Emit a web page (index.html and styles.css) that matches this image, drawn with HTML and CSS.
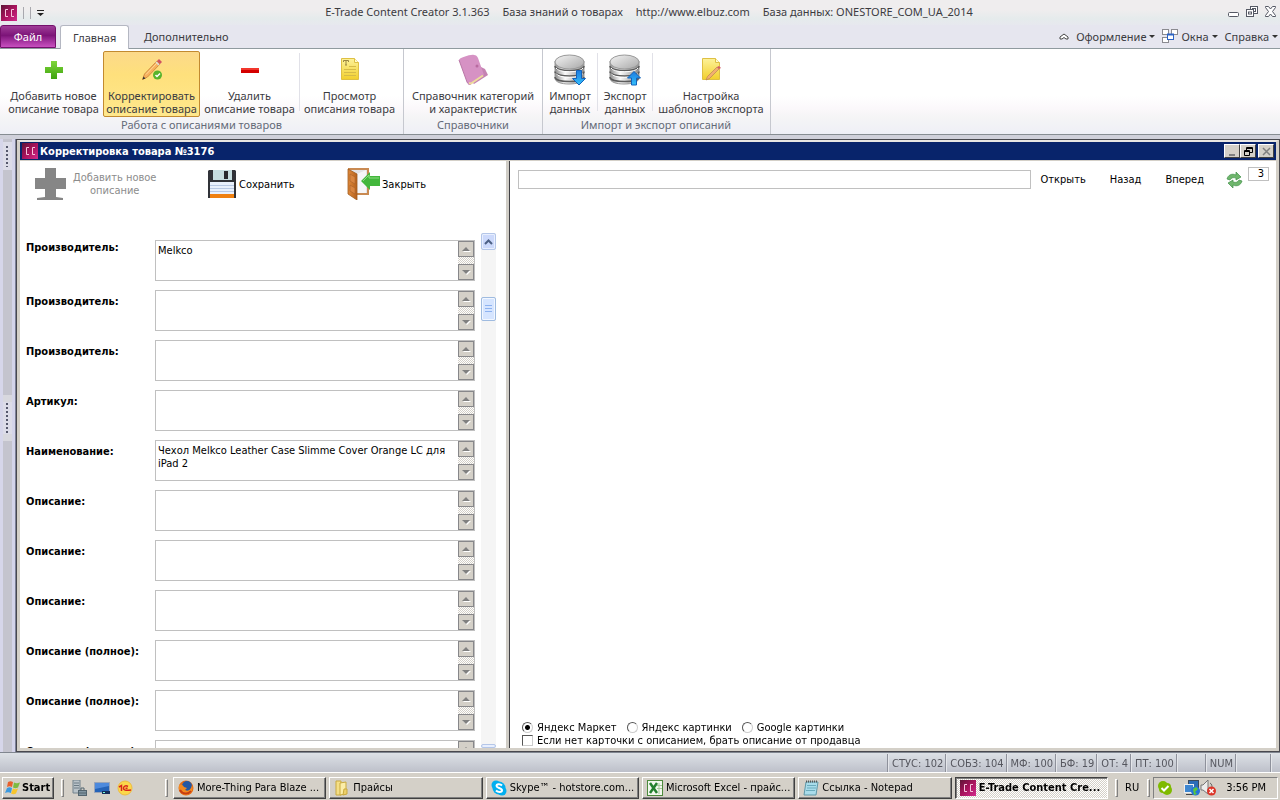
FILE: index.html
```html
<!DOCTYPE html>
<html lang="ru">
<head>
<meta charset="utf-8">
<title>E-Trade Content Creator</title>
<link rel="stylesheet" href="styles.css">
</head>
<body>
<svg class="defs" aria-hidden="true">
  <defs>
    <linearGradient id="gCC" x1="0" y1="0" x2="1" y2="1"><stop offset="0" stop-color="#5e1436"/><stop offset=".5" stop-color="#a8125c"/><stop offset="1" stop-color="#d22a8c"/></linearGradient>
    <linearGradient id="gGreen" x1="0" y1="0" x2="0" y2="1"><stop offset="0" stop-color="#7fd63a"/><stop offset="1" stop-color="#3da30f"/></linearGradient>
    <linearGradient id="gNote" x1="0" y1="0" x2="0" y2="1"><stop offset="0" stop-color="#fdf29a"/><stop offset="1" stop-color="#f2cf2c"/></linearGradient>
    <linearGradient id="gDisk" x1="0" y1="0" x2="1" y2="1"><stop offset="0" stop-color="#f4f4f4"/><stop offset="1" stop-color="#a8a8a8"/></linearGradient>
    <linearGradient id="gSide" x1="0" y1="0" x2="1" y2="0"><stop offset="0" stop-color="#8c8c8c"/><stop offset=".35" stop-color="#fafafa"/><stop offset="1" stop-color="#8c8c8c"/></linearGradient>
    <linearGradient id="gBlue" x1="0" y1="0" x2="0" y2="1"><stop offset="0" stop-color="#1b7be0"/><stop offset="1" stop-color="#35c0fa"/></linearGradient>
    <linearGradient id="gDoor" x1="0" y1="0" x2="1" y2="0"><stop offset="0" stop-color="#e08a3c"/><stop offset="1" stop-color="#b5601c"/></linearGradient>
    <symbol id="cc" viewBox="0 0 16 16"><rect width="16" height="16" fill="url(#gCC)"/><path d="M7 4.500H4.500v7H7M13 4.500h-2.500v7H13" fill="none" stroke="#f6c4de"/></symbol>
    <symbol id="db" viewBox="0 0 32 32">
      <path d="M1 7v17c0 4 6 6 14 6s15-2 15-6V7z" fill="url(#gSide)" stroke="#999"/>
      <path d="M1 12c0 6 29 6 29 0M1 17.500c0 6 29 6 29 0M1 23c0 6 29 6 29 0" fill="none" stroke="#5c5c5c" stroke-width="1.500"/>
      <path d="M2 14c2 5 25 5 27 0M2 19.500c2 5 25 5 27 0" fill="none" stroke="#fff"/>
      <ellipse cx="15.500" cy="8" rx="14.500" ry="7" fill="url(#gDisk)" stroke="#999"/>
    </symbol>
  </defs>
</svg>

<header class="titlebar">
  <div class="quick">
    <svg class="i16"><use href="#cc"/></svg>
    <i class="qsep"></i><i class="qsep"></i>
    <svg width="7" height="6" viewBox="0 0 7 6"><path d="M0 0h7v1H0zM0 3h7L3.500 6z" fill="#222"/></svg>
  </div>
  <div class="caption"><span>E-Trade Content Creator 3.1.363</span><span>База знаний о товарах</span><span>http://www.elbuz.com</span><span>База данных: ONESTORE_COM_UA_2014</span></div>
  <div class="winctl">
    <svg width="11" height="12" viewBox="0 0 11 12"><rect x=".5" y="6.500" width="10" height="4" rx="1" fill="#fff" stroke="#555964"/></svg>
    <svg width="12" height="12" viewBox="0 0 12 12" fill="#fff" stroke="#555964"><rect x="4.500" y=".5" width="7" height="7"/><rect x="6.500" y="2.500" width="3" height="3"/><rect x=".5" y="3.500" width="7" height="7"/><rect x="2.500" y="6" width="3" height="2"/></svg>
    <svg width="11" height="11" viewBox="0 0 11 11" fill="#fff" stroke="#555964"><path d="M.5.500h3l2 2.500 2-2.500h3v1L7.500 5.500l3 4v1h-3l-2-2.500-2 2.500h-3v-1l3-4-3-4z"/></svg>
  </div>
</header>

<nav class="tabs">
  <button class="file">Файл</button>
  <button class="tab on">Главная</button>
  <button class="tab">Дополнительно</button>
  <div class="tabs-right">
    <svg width="10" height="8" viewBox="0 0 10 8"><path d="M1 4l4-3 4 3v2H7L5 4.500 3 6H1z" fill="#fff" stroke="#444"/></svg>
    <button class="drop">Оформление<i></i></button>
    <button class="drop win"><svg width="16" height="15" viewBox="0 0 16 15" fill="#fff" stroke="#8a8a90"><rect x=".5" y=".5" width="6" height="5"/><rect x="9.500" y=".5" width="6" height="5"/><rect x=".5" y="8.500" width="6" height="5"/><rect x="5.500" y="5.500" width="6" height="5" stroke="#2b62c4"/><path d="M5 5.500h7" stroke="#2b62c4" stroke-width="2"/></svg>Окна<i></i></button>
    <button class="drop">Справка<i></i></button>
  </div>
</nav>

<section class="ribbon">
  <div class="group">
    <div class="tools">
      <button class="tool"><svg class="i32" viewBox="0 0 32 32"><path d="M13 7h6v6h6v6h-6v6h-6v-6H7v-6h6z" fill="url(#gGreen)"/></svg><span>Добавить новое<br>описание товара</span></button>
      <button class="tool on"><svg class="i32" viewBox="0 0 32 32"><path d="M6.500 25.500L8.500 20 21 7l3 3-12.500 13z" fill="#f8b05c" stroke="#c5803a" stroke-width=".8"/><path d="M21 7l2-2 3 3-2 2z" fill="#cf5360"/><path d="M20 8l3 3" stroke="#d8dce0" stroke-width="1.500"/><path d="M10 20.500L21 9" stroke="#ffdb9c"/><path d="M6.500 25.500l1-3 2 2z" fill="#333"/><circle cx="21.500" cy="21" r="4.500" fill="#58b32c"/><path d="M19.500 21l1.500 1.500 3-3" stroke="#fff" fill="none" stroke-width="1.500"/></svg><span>Корректировать<br>описание товара</span></button>
      <button class="tool"><svg class="i32" viewBox="0 0 32 32"><rect x="7" y="14" width="18" height="5" fill="#d40000"/><rect x="7" y="14" width="18" height="2" fill="#f2362c"/></svg><span>Удалить<br>описание товара</span></button>
      <i class="vsep"></i>
      <button class="tool"><svg class="i32" viewBox="0 0 32 32"><path d="M7.500 4.500h13l4 4v17h-17z" fill="url(#gNote)" stroke="#dec044"/><path d="M20.500 4.500v4h4" fill="#fffbd0" stroke="#dec044"/><path d="M9.500 8V6.500h5V8M12 6.500V11M11 11h2" stroke="#9a8740" fill="none"/><path d="M15 12.500h7M10 15.500h12M10 18.500h12M10 21.500h12" stroke="#d6bb48"/></svg><span>Просмотр<br>описания товара</span></button>
    </div>
    <div class="gname">Работа с описаниями товаров</div>
  </div>
  <div class="group">
    <div class="tools">
      <button class="tool w132"><svg class="i32" viewBox="0 0 32 32"><path d="M24 13l4 2 3 6-14 9-4-4z" fill="#c583b2"/><path d="M2 6c0-2 12-6 15-5 2 0 3 1 4 3l6 17-13 9c-2 1-3 0-4-2z" fill="#d692c4"/><path d="M2 6l8 22c1 2 2 3 4 2" fill="none" stroke="#b977a6"/><path d="M12 29l2 .500 12-8" stroke="#eddc9c" stroke-width="2" fill="none"/><circle cx="20" cy="12" r="1.500" fill="#b86aa0"/></svg><span>Справочник категорий<br>и характеристик</span></button>
    </div>
    <div class="gname">Справочники</div>
  </div>
  <div class="group io">
    <div class="tools">
      <button class="tool w52"><svg class="i32" viewBox="0 0 32 32"><use href="#db"/><path d="M22.500 16.500h5v8h4L25 31l-6.500-6.500h4z" fill="url(#gBlue)" stroke="#1263bb"/></svg><span>Импорт<br>данных</span></button>
      <i class="vsep"></i>
      <button class="tool w52"><svg class="i32" viewBox="0 0 32 32"><use href="#db"/><path d="M22.500 31h5v-7h4L25 17.500 18.500 24h4z" fill="url(#gBlue)" stroke="#1263bb"/></svg><span>Экспорт<br>данных</span></button>
      <i class="vsep"></i>
      <button class="tool w114"><svg class="i32" viewBox="0 0 32 32"><path d="M7.500 4.500h13l4 4v17h-17z" fill="url(#gNote)" stroke="#dec044"/><path d="M20.500 4.500v4h4" fill="#fffbd0" stroke="#dec044"/><path d="M11 26l1.500-3.500L22 13l2 2-9.500 9.500z" fill="#f2ae70" stroke="#b07a55" stroke-width=".6"/><path d="M22 13l2-1 2 2-2 1z" fill="#d25d64"/></svg><span>Настройка<br>шаблонов экспорта</span></button>
    </div>
    <div class="gname">Импорт и экспорт описаний</div>
  </div>
</section>

<div class="work">
  <aside class="dock"><div class="grip"></div><div class="grip mid"></div></aside>
  <main class="mdi">
    <div class="mdi-title">
      <svg class="i16"><use href="#cc"/></svg><h1>Корректировка товара №3176</h1>
      <div class="mdi-ctl">
        <button aria-label="Свернуть"><svg width="9" height="9" viewBox="0 0 9 9"><path d="M1 8h6" stroke="#808080" stroke-width="2"/></svg></button>
        <button aria-label="Восстановить"><svg width="9" height="9" viewBox="0 0 9 9" fill="none" stroke="#000"><path d="M2.500 3V.500h6v5H6M2 1.500h7M.5 3.500h5v5h-5zM0 4.500h6"/></svg></button>
        <button class="x" aria-label="Закрыть окно"><svg width="9" height="9" viewBox="0 0 9 9"><path d="M1 1l7 7M8 1L1 8" stroke="#808080" stroke-width="1.500"/></svg></button>
      </div>
    </div>
    <div class="panes">
      <section class="left">
        <div class="actions">
          <button class="act off"><svg width="32" height="32" viewBox="0 0 32 32"><path d="M11 0h11v10h10v11H22v8l7 1v2H3v-2l8-1v-8H1V10h10z" fill="#868686"/></svg><span>Добавить новое<br>описание</span></button>
          <button class="act"><svg width="30" height="30" viewBox="0 0 30 30"><path d="M1 2l1-1h26l1 1v27H1z" fill="#303238"/><rect x="6" y="1" width="19" height="10" fill="#c5dde0"/><rect x="17" y="2" width="4" height="8" fill="#26282d"/><rect x="3" y="13" width="24" height="12" fill="#e8f0fc"/><path d="M3 16.500h24M3 19.500h24M3 22.500h24" stroke="#b7c8e4"/><rect x="3" y="25" width="24" height="4" fill="#ef8010"/></svg><span>Сохранить</span></button>
          <button class="act"><svg width="33" height="32" viewBox="0 0 33 32"><path d="M1 0h21v27H9V2H1z" fill="#c98a52"/><path d="M3 2h17v23H9z" fill="#e3e3e6"/><path d="M10 6l9-4v23h-9z" fill="#f6f6f8"/><path d="M1 1l9 5v26l-9-6z" fill="url(#gDoor)" stroke="#a05a20" stroke-width=".8"/><path d="M3 6l5 3v7l-5-3zM3 17l5 3v6l-5-3z" fill="#d98540" stroke="#a9622a" stroke-width=".6"/><path d="M14 13l9-9v4h10v10H23v4z" fill="#43b73c"/><path d="M16 13l6-6v3h10" stroke="#8cdc80" fill="none"/></svg><span>Закрыть</span></button>
        </div>
        <div class="scroll">
          <form class="rows">
            <div class="row first"><label for="f1">Производитель:</label><div class="field"><textarea id="f1">Melkco</textarea><div class="spin"><b></b><b class="dn"></b></div></div></div>
            <div class="row"><label for="f2">Производитель:</label><div class="field"><textarea id="f2"></textarea><div class="spin"><b></b><b class="dn"></b></div></div></div>
            <div class="row"><label for="f3">Производитель:</label><div class="field"><textarea id="f3"></textarea><div class="spin"><b></b><b class="dn"></b></div></div></div>
            <div class="row"><label for="f4">Артикул:</label><div class="field"><textarea id="f4"></textarea><div class="spin"><b></b><b class="dn"></b></div></div></div>
            <div class="row"><label for="f5">Наименование:</label><div class="field"><textarea id="f5">Чехол Melkco Leather Case Slimme Cover Orange LC для iPad 2</textarea><div class="spin"><b></b><b class="dn"></b></div></div></div>
            <div class="row"><label for="f6">Описание:</label><div class="field"><textarea id="f6"></textarea><div class="spin"><b></b><b class="dn"></b></div></div></div>
            <div class="row"><label for="f7">Описание:</label><div class="field"><textarea id="f7"></textarea><div class="spin"><b></b><b class="dn"></b></div></div></div>
            <div class="row"><label for="f8">Описание:</label><div class="field"><textarea id="f8"></textarea><div class="spin"><b></b><b class="dn"></b></div></div></div>
            <div class="row"><label for="f9">Описание (полное):</label><div class="field"><textarea id="f9"></textarea><div class="spin"><b></b><b class="dn"></b></div></div></div>
            <div class="row"><label for="f10">Описание (полное):</label><div class="field"><textarea id="f10"></textarea><div class="spin"><b></b><b class="dn"></b></div></div></div>
            <div class="row"><label for="f11">Описание (полное):</label><div class="field"><textarea id="f11"></textarea><div class="spin"><b></b><b class="dn"></b></div></div></div>
          </form>
          <div class="vbar">
            <div class="vbtn"><svg width="9" height="6" viewBox="0 0 9 6"><path d="M1 5l3.500-3.500L8 5" fill="none" stroke="#4d6185" stroke-width="2"/></svg></div>
            <div class="thumb"></div>
            <div class="vbtn end"></div>
          </div>
        </div>
      </section>
      <section class="right">
        <div class="browser">
          <input class="url" type="text" aria-label="Адрес" autofocus>
          <button>Открыть</button><button>Назад</button><button>Вперед</button>
          <svg width="17" height="16" viewBox="0 0 17 16"><path d="M1 7c1-4 5-6 9-4V0l5 5-5 3V6C7 5 5 6 4 8z" fill="#6fb66c" stroke="#3f8f48" stroke-width=".7"/><path d="M16 9c-1 4-5 6-9 4v3L2 11l5-3v2c3 1 5 0 6-2z" fill="#6fb66c" stroke="#3f8f48" stroke-width=".7"/></svg>
          <input class="num" type="text" value="3" aria-label="Количество">
        </div>
        <div class="opts">
          <div class="radios">
            <label><input type="radio" name="src" checked>Яндекс Маркет</label>
            <label><input type="radio" name="src">Яндекс картинки</label>
            <label><input type="radio" name="src">Google картинки</label>
          </div>
          <label class="chk"><input type="checkbox">Если нет карточки с описанием, брать описание от продавца</label>
        </div>
      </section>
    </div>
  </main>
</div>

<div class="status"><span>СТУС: 102</span><span>СОБЗ: 104</span><span>МФ: 100</span><span>БФ: 19</span><span>ОТ: 4</span><span>ПТ: 100</span><span class="gap"></span><span>NUM</span><span class="gap wide"></span><span class="tail"></span></div>

<footer class="taskbar">
  <button class="start"><svg width="16" height="16" viewBox="0 0 16 16"><path d="M3 2c2-1 3-1 5 0L7 7C5 6 4 6 2 7z" fill="#e8602c"/><path d="M9 2.500c2 1 3 1 6 0l-2 5c-2 1-3 1-5 0z" fill="#7dbb42"/><path d="M2 8c2-1 3-1 5 0l-1 5c-2-1-4-1-6 0z" fill="#3c9ae0"/><path d="M8 8.500c2 1 3 1 5 0l-2 5c-2 1-3 1-5 0z" fill="#f7c52d"/></svg>Start</button>
  <i class="tsep"></i>
  <div class="ql">
    <svg class="i16" viewBox="0 0 16 16"><path d="M2 0h7v13H2z" fill="#b9c3c9" stroke="#73828c"/><path d="M3 3h5M3 5.500h5M3 8h5" stroke="#6c7b85"/><rect x="7.500" y="10.500" width="8" height="5" fill="#8195a1" stroke="#53646e"/><path d="M10 10V8h3v2M7 13h9" stroke="#53646e" fill="none"/></svg>
    <svg class="i16" viewBox="0 0 16 16"><path d="M.5 2.500h15v10H.5z" fill="#2463b8" stroke="#9aa5b8"/><path d="M1 3h14v3L1 9z" fill="#4d8add"/><path d="M8 12.500h8" stroke="#142c5a" stroke-width="3"/><rect x="9" y="12" width="2" height="1" fill="#7fd"/></svg>
    <svg class="i16" viewBox="0 0 16 16"><circle cx="8" cy="8" r="7" fill="#fbd84a" stroke="#edbb42"/><path d="M2 7l2.500-1.500V11M11 6.500C8.500 5 6.500 6.500 6.500 8.300S8.500 10.800 14 10M10.500 8.300h-2" fill="none" stroke="#d8251c" stroke-width="1.500"/></svg>
  </div>
  <i class="tsep"></i>
  <div class="tasks">
    <button class="task"><svg class="i16" viewBox="0 0 16 16"><circle cx="8" cy="8" r="7.500" fill="#e66b14"/><circle cx="9" cy="6" r="5" fill="#2458a4"/><path d="M1 5c2-1 4 0 5 2l3 1-2 2c3 2 6 0 7-5 2 6-2 10-6 10S0 11 1 5z" fill="#f3891f"/><path d="M2 10c2 4 8 5 11 1" stroke="#c73c12" fill="none" stroke-width="2"/></svg><span>More-Thing Para Blaze ...</span></button>
    <button class="task"><svg class="i16" viewBox="0 0 16 16"><path d="M2 1h5v14H2z" fill="#f5df86" stroke="#c9a93e"/><path d="M6 3l6-1v12l-6 1z" fill="#fbeda8" stroke="#c9a93e"/><path d="M10 9h3v5l-4 1z" fill="#ecd06a" stroke="#c9a93e"/></svg><span>Прайсы</span></button>
    <button class="task"><svg class="i16" viewBox="0 0 16 16"><circle cx="8" cy="8" r="6.500" fill="#00aff0"/><circle cx="5" cy="5" r="4.500" fill="#00aff0"/><circle cx="11" cy="11" r="4.500" fill="#00aff0"/><path d="M11 5.500C9 3.500 5.500 4 5.500 6S11 8 11 10.300 7 12.500 5 10.500" fill="none" stroke="#fff" stroke-width="2"/></svg><span>Skype™ - hotstore.com...</span></button>
    <button class="task"><svg class="i16" viewBox="0 0 16 16"><rect x=".5" y=".5" width="15" height="15" fill="#f2f8ee" stroke="#4c8a3c"/><path d="M12 3v11M10 5.500h5M10 8.500h5" stroke="#a5c89a"/><path d="M3 3l7 10M10 3L3 13" stroke="#23802e" stroke-width="2.500"/></svg><span>Microsoft Excel - прайс...</span></button>
    <button class="task"><svg class="i16" viewBox="0 0 16 16"><path d="M3 2h12l-2 13H1z" fill="#a9dcea" stroke="#5f98a8"/><path d="M4 5.500h9M4 8h9M3 10.500h9" stroke="#6aacbd"/><path d="M3 1.500h12" stroke="#555" stroke-dasharray="1 1" stroke-width="2"/></svg><span>Ссылка - Notepad</span></button>
    <button class="task on"><svg class="i16"><use href="#cc"/></svg><span>E-Trade Content Cre...</span></button>
  </div>
  <i class="tsep"></i>
  <span class="lang">RU</span>
  <i class="tsep"></i>
  <div class="tray">
    <svg class="i16" viewBox="0 0 16 16"><circle cx="6" cy="6" r="5" fill="#7fba00"/><circle cx="10" cy="10" r="5" fill="#7fba00"/><rect x="2" y="3" width="12" height="10" rx="4" fill="#7fba00"/><path d="M4.500 8l2.500 2.500L11.500 6" stroke="#fff" stroke-width="2" fill="none"/></svg>
    <svg class="i16 net" viewBox="0 0 16 16"><rect x="4.500" y=".5" width="10" height="8" fill="#2b6db8" stroke="#3a4a5c"/><rect x=".5" y="4.500" width="9" height="8" fill="#3d86d0" stroke="#eee"/><path d="M2 14.500h7" stroke="#444"/><circle cx="11.500" cy="11" r="4.500" fill="#2574d8"/><path d="M9 9l3-2 2 2-3 3 2 2-3 1z" fill="#5ac83c"/></svg>
    <svg class="i16" viewBox="0 0 16 16"><path d="M1 5h2l5-5v14L3 10H1z" fill="#ececec" stroke="#777"/><path d="M10 3c2 1 2 3 2 5" stroke="#666" fill="none"/><circle cx="11.500" cy="11" r="4.500" fill="#dc3528"/><path d="M9.500 9l4 4M13.500 9l-4 4" stroke="#fff" stroke-width="1.500"/></svg>
    <span>3:56 PM</span>
  </div>
</footer>
</body>
</html>
```
FILE: styles.css
```css
* { box-sizing: border-box; }
html, body { height: 100%; }
body {
  margin: 0; display: flex; flex-direction: column; overflow: hidden;
  background: #d4d0c8; color: #000;
  font: 11px/13px "DejaVu Sans Condensed", "DejaVu Sans", sans-serif;
}
button { font: inherit; color: inherit; background: none; border: 0; padding: 0; margin: 0; }
svg { display: block; flex: none; }
.defs { position: absolute; width: 0; height: 0; }
.i16 { width: 16px; height: 16px; }
.i32 { width: 32px; height: 32px; overflow: visible; }

.titlebar, .tabs, .ribbon { font-family: "Noto Sans", sans-serif; color: #3b3b3f; }
.titlebar { height: 25px; flex: none; display: flex; align-items: center; background: linear-gradient(#efedee 40%, #e5ebec 75%, #e7e8ef); }
.quick { display: flex; align-items: center; gap: 6px; padding-left: 1px; width: 130px; }
.qsep { width: 1px; height: 12px; background: #a8a8ae; }
.caption { flex: 1; display: flex; justify-content: center; gap: 13px; white-space: nowrap; padding: 0 0 2px 18px; }
.winctl { display: flex; gap: 7px; width: 130px; justify-content: flex-end; padding: 0 4px 2px 0; }

.tabs { height: 24px; flex: none; display: flex; align-items: stretch; background: #e6e6ef; border-bottom: 1px solid #8f9a9f; font-size: 11px; }
.file { width: 56px; color: #fff; border: 1px solid #74106c; border-radius: 3px 3px 0 0; background: linear-gradient(#a03c98, #7c1478 45%, #8c2088 55%, #c850c0); }
.tab { padding: 0 15px; }
.tab.on { background: #fff; border: 1px solid #b4b7c2; border-bottom: 0; border-radius: 3px 3px 0 0; margin: 0 0 -1px 4px; padding: 0 12px; width: 69px; }
.tabs-right { margin-left: auto; display: flex; align-items: center; gap: 7px; padding-right: 2px; }
.drop { display: flex; align-items: center; gap: 3px; }
.drop i { border: 3px solid transparent; border-top-color: #333; border-bottom: 0; }

.ribbon { height: 86px; flex: none; display: flex; background: linear-gradient(#fff 55%, #fbf8fb 70%, #f5f5f6 80%, #eeeff6); border-bottom: 1px solid #868d92; }
.group { display: flex; flex-direction: column; border-right: 1px solid #c6c8cf; padding: 2px 3px 0; }
.group.io { padding: 2px 2px 0 1px; }
.tools { display: flex; gap: 1px; }
.tool { height: 66px; padding: 2px 1px 0; border: 1px solid transparent; border-radius: 2px; display: flex; flex-direction: column; align-items: center; gap: 3px; white-space: nowrap; }
.group:first-child .tool { width: 97px; }
.group:first-child { padding: 2px 5px 0; }
.tool.w132 { width: 132px; }
.tool.w52 { width: 52px; }
.tool.w114 { width: 114px; }
.tool.on { border-color: #c28a30; background: linear-gradient(#fcd98a, #fee07c 35%, #ffe88c); }
.vsep { width: 1px; height: 58px; margin: 2px 0 0; background: #e1e1e8; }
.gname { text-align: center; color: #646a78; line-height: 15px; }

.work { flex: 1; min-height: 0; display: flex; background: #cfd0da; padding-top: 4px; }
.dock { width: 16px; flex: none; display: flex; flex-direction: column; justify-content: space-between; background: linear-gradient(90deg, #d6d6ea 3px, #c4c4ce 3px, #c4c4ce 12px, #d4d4ea 12px, #d4d4ea 15px, #7c8098 15px); padding: 3px 4px 311px 3px; }
.grip { height: 28px; background: radial-gradient(circle, #55586c 1px, transparent 1px) 0 0 / 8px 4px, #dcdce8; background-position: 0 4px; border: solid #dcdce8; border-width: 3px 0; }
.grip.mid { height: 46px; border-width: 7px 0; border-color: #d8d8de; }
.mdi { flex: 1; min-width: 0; display: flex; flex-direction: column; background: #fff; border: solid #d4d0c8; border-width: 3px 4px 4px 4px; box-shadow: inset 0 0 0 0 #fff; outline: 1px solid #48484e; outline-offset: -1px; border-top-color: #e8e6e2; }
.mdi-title { height: 18px; flex: none; display: flex; align-items: center; gap: 2px; padding: 0 2px; background: #08246b; color: #fff; }
.mdi-title h1 { margin: 0; font-size: 11px; line-height: 13px; font-weight: bold; }
.mdi-ctl { margin-left: auto; display: flex; }
.mdi-ctl button { width: 16px; height: 14px; display: flex; align-items: center; justify-content: center; background: #d4d0c8; border: 1px solid; border-color: #fff #404040 #404040 #fff; }
.mdi-ctl .x { margin-left: 2px; }

.panes { flex: 1; min-height: 0; display: flex; border-top: 1px solid #d4d0c8; }
.left { width: 490px; flex: none; display: flex; flex-direction: column; border-right: 1px solid #404044; box-shadow: inset -3px 0 #d0cdc6; }
.actions { height: 72px; flex: none; display: flex; align-items: flex-start; padding: 7px 0 0 14px; }
.act { display: flex; align-items: center; gap: 2px; height: 32px; width: 140px; }
.act.off { color: #8c8c8c; gap: 7px; width: 173px; }
.scroll { flex: 1; min-height: 0; display: flex; gap: 6px; overflow: hidden; }
.rows { width: 455px; display: flex; flex-direction: column; gap: 9px; padding: 7px 0 0 6px; }
.row { height: 41px; flex: none; display: flex; }
.row label { width: 129px; flex: none; padding-top: 5px; font-weight: bold; white-space: nowrap; }
.row.first label { padding-top: 1px; }
.field { flex: 1; display: flex; border: 1px solid #c0c0c0; }
.field textarea { flex: 1; min-width: 0; border: 0; outline: 0; resize: none; margin: 0; padding: 3px 2px; font: 11px/13px "DejaVu Sans Condensed", sans-serif; overflow: hidden; background: #fff; }
.spin { width: 16px; display: flex; flex-direction: column; justify-content: space-between; background: repeating-conic-gradient(#d4d0c8 0 25%, #fff 0 50%) 0 0 / 2px 2px; }
.spin b { height: 16px; border: 1px solid #87878a; background: #d4d0c8; display: flex; align-items: center; justify-content: center; }
.spin b::before { content: ""; border: 4px solid transparent; border-top: 0; border-bottom-color: #808080; filter: drop-shadow(1px 1px 0 #fff); }
.spin .dn::before { border-top: 4px solid #808080; border-bottom: 0; }
.vbar { width: 15px; display: flex; flex-direction: column; background: #f5f5f5; }
.vbtn { height: 17px; flex: none; display: flex; align-items: center; justify-content: center; border: 1px solid #b4c6e8; border-radius: 2px; background: #ccd9fb; box-shadow: inset 0 0 0 1px #e8effe; }
.thumb { height: 24px; margin-top: 47px; border: 1px solid #9fbbe0; border-radius: 2px; flex: none; background: repeating-linear-gradient(#8db2f0 0 1px, transparent 1px 3px) 3px 7px / 7px 9px no-repeat, #d6e5ff; box-shadow: inset 0 0 0 1px #f2f7ff; }
.vbtn.end { height: 4px; margin-top: auto; }

.right { flex: 1; min-width: 0; display: flex; flex-direction: column; justify-content: space-between; }
.browser { display: flex; align-items: center; padding: 5px 7px 0 8px; }
.url { flex: 1; min-width: 0; height: 19px; margin: 4px 10px 0 0; border: 1px solid #c0c0c0; padding: 0 2px; outline: 0; font: inherit; }
.browser button { margin: 3px 24px 0 0; }
.browser svg { margin: 4px 5px 0 -2px; }
.num { width: 21px; height: 14px; margin-bottom: 8px; border: 1px solid #c0c0c0; text-align: right; padding: 0 4px; font: inherit; }
.opts { padding: 0 0 1px 12px; }
.opts label { display: flex; align-items: center; gap: 4px; white-space: nowrap; }
.radios { display: flex; gap: 10px; }
.opts input { appearance: none; margin: 0; width: 11px; height: 11px; border: 1px solid; border-color: #555 #ccc #ccc #555; background: #fff; }
.opts input[type=radio] { border-radius: 50%; }
.opts input[type=radio]:checked { background: radial-gradient(circle, #000 2px, #fff 3px); }

.status { height: 20px; flex: none; display: flex; justify-content: flex-end; border-top: 1px solid #808690; background: linear-gradient(#dde1e6, #bdc0ca); color: #55565e; }
.status span { border-left: 1px solid #8e919b; box-shadow: inset 1px 0 #e4e6ea; padding: 3px 2px 0 4px; margin-top: 1px; }
.status .gap { width: 29px; }
.status .wide { width: 35px; }
.status .tail { width: 10px; }

.taskbar { height: 28px; flex: none; display: flex; align-items: center; gap: 5px; padding: 3px 2px 1px; background: #d4d0c8; border-top: 1px solid #fff; }
.start, .task { height: 22px; display: flex; align-items: center; border: 1px solid; border-color: #fff #404040 #404040 #fff; box-shadow: inset -1px -1px #808080; }
.start { width: 52px; gap: 1px; padding: 0 2px; font-weight: bold; }
.tsep { width: 3px; height: 18px; flex: none; border: 1px solid; border-color: #fff #808080 #808080 #fff; margin: 0 1px 0 2px; }
.ql { display: flex; gap: 7px; width: 88px; padding-left: 1px; }
.tasks { flex: 1; min-width: 0; display: flex; gap: 3px; margin-left: -1px; }
.task { flex: 1; min-width: 0; gap: 3px; padding: 0 4px; white-space: nowrap; overflow: hidden; }
.task.on { font-weight: bold; border-color: #404040 #fff #fff #404040; box-shadow: inset 1px 1px #808080; background: repeating-conic-gradient(#d4d0c8 0 25%, #fff 0 50%) 0 0 / 2px 2px; }
.lang { padding: 0 1px; }
.tray { height: 22px; display: flex; align-items: center; border: 1px solid; border-color: #808080 #fff #fff #808080; padding: 0 11px 0 3px; white-space: nowrap; margin-left: -3px; }
.tray .net { margin-left: 11px; }
.tray span { margin-left: 10px; }
```
